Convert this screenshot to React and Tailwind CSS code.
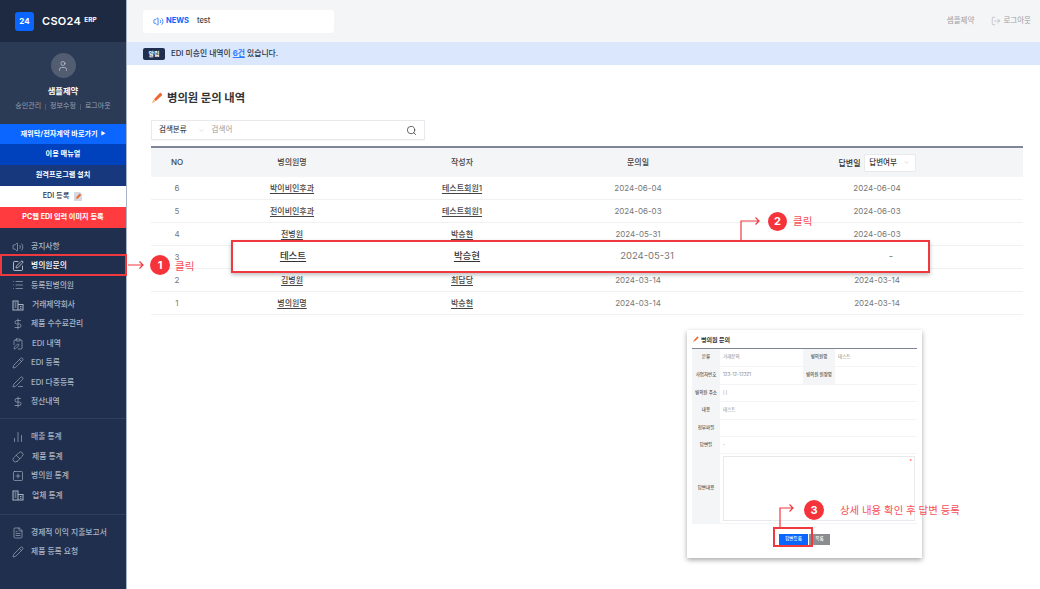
import React from "react";
import {
  Volume2, SquarePen, List, DollarSign, ClipboardPen, Pencil, PenLine,
  ChartNoAxesColumn, Pill, SquarePlus, FileText, User, LogOut, Search, ChevronDown,
} from "lucide-react";

const row = "grid grid-cols-[52px_178px_162px_190px_1fr] items-center text-center";

// 건물 아이콘은 패키지에 맞는 모양이 없어서 직접 그림
function Offices({ size = 12, strokeWidth = 1.3, className }) {
  return (
    <svg width={size} height={size} viewBox="0 0 12 12" fill="none" stroke="currentColor" strokeWidth={strokeWidth * 0.8} className={className}>
      <path d="M1 11V2h5v9M6 5.5h5V11M0.5 11h11" />
      <path d="M2.6 4h1.8M2.6 6h1.8M2.6 8h1.8M8 7.5h1.4M8 9.3h1.4" />
    </svg>
  );
}

const menuA = [
  { icon: Volume2, label: "공지사항" },
  { icon: SquarePen, label: "병의원문의", active: true },
  { icon: List, label: "등록된병의원" },
  { icon: Offices, label: "거래제약회사", indent: true },
  { icon: DollarSign, label: "제품 수수료관리" },
  { icon: ClipboardPen, label: "EDI 내역", indent: true },
  { icon: Pencil, label: "EDI 등록" },
  { icon: PenLine, label: "EDI 다중등록" },
  { icon: DollarSign, label: "정산내역" },
];
const menuB = [
  { icon: ChartNoAxesColumn, label: "매출 통계" },
  { icon: Pill, label: "제품 통계", indent: true },
  { icon: SquarePlus, label: "병의원 통계" },
  { icon: Offices, label: "업체 통계", indent: true },
];
const menuC = [
  { icon: FileText, label: "경제적 이익 지출보고서" },
  { icon: Pencil, label: "제품 등록 요청" },
];

const rows = [
  ["6", "박이비인후과", "테스트회원1", "2024-06-04", "2024-06-04"],
  ["5", "전이비인후과", "테스트회원1", "2024-06-03", "2024-06-03"],
  ["4", "전병원", "박승현", "2024-05-31", "2024-06-03"],
  ["3", "", "", "", ""],
  ["2", "김병원", "최담당", "2024-03-14", "2024-03-14"],
  ["1", "병의원명", "박승현", "2024-03-14", "2024-03-14"],
];

function PencilMark({ size = 12 }) {
  return (
    <svg width={size} height={size} viewBox="0 0 12 12" className="shrink-0">
      <path d="M3 7.2 8.6 1.2a1.1 1.1 0 0 1 1.5 0l.7.7a1.1 1.1 0 0 1 0 1.5L4.8 9Z" fill="#f0642e" />
      <path d="M2.6 7.6 4.4 9.4 0.8 11.2Z" fill="#f8b27a" />
    </svg>
  );
}

function DocPencil() {
  return (
    <svg width="10" height="11" viewBox="0 0 10 11" className="shrink-0">
      <path d="M1 1h6l2 2v7H1Z" fill="#d5d9e0" />
      <path d="M3 6.6 6.8 2.6l1.4 1.3L4.4 8Z" fill="#f0642e" />
      <path d="M3 6.6 4.4 8 2.2 8.8Z" fill="#f8b27a" />
    </svg>
  );
}

function MenuItem({ icon: Icon, label, active, indent }) {
  return (
    <div className={`flex h-[19.4px] items-center pl-[12px] text-[7.8px] font-medium ${active ? "text-white" : "text-[#aab4c4]"}`}>
      <Icon size={12} strokeWidth={1.3} className={`shrink-0 ${active ? "text-white" : "text-[#aab4c4]"}`} />
      <span className={indent ? "ml-[8px]" : "ml-[7px]"}>{label}</span>
    </div>
  );
}

function Sidebar() {
  return (
    <aside className="flex h-full w-[127px] shrink-0 flex-col border-r border-[#a9b4c6] bg-[#1f2f4d]">
      <div className="flex h-[42px] items-center bg-[#1d2a42] pl-[15px]">
        <div className="flex h-[19px] w-[19px] items-center justify-center rounded-[3px] bg-[#0a66ff] text-[8px] font-bold text-white">24</div>
        <span className="ml-[8px] text-[11px] font-semibold tracking-[0.3px] text-white">CSO24</span>
        <span className="ml-[3px] text-[6.5px] font-bold text-white">ERP</span>
      </div>
      <div className="flex h-[82px] flex-col items-center bg-[#2b3a55] pt-[11px]">
        <div className="flex h-[25px] w-[25px] items-center justify-center rounded-full bg-[#525d72]">
          <User size={12} strokeWidth={1.4} className="text-[#c6ccd6]" />
        </div>
        <div className="mt-[7px] text-[8.3px] font-bold text-white">샘플제약</div>
        <div className="mt-[4px] flex items-center gap-[4px] text-[7px] text-[#98a2b3]">
          <span>승인관리</span><span className="h-[6px] w-px bg-[#4d5a72]" />
          <span>정보수정</span><span className="h-[6px] w-px bg-[#4d5a72]" />
          <span>로그아웃</span>
        </div>
      </div>
      <div className="flex h-[20px] items-center justify-center gap-[3px] bg-[#0a66ff] text-[7.2px] font-bold text-white">
        재위탁/전자계약 바로가기
        <span className="text-[5px]">▶</span>
      </div>
      <div className="flex h-[21px] items-center justify-center bg-[#0041bd] text-[7.2px] font-bold text-white">이용 매뉴얼</div>
      <div className="flex h-[21px] items-center justify-center bg-[#17387c] text-[7.2px] font-bold text-white">원격프로그램 설치</div>
      <div className="flex h-[21px] items-center justify-center gap-[4px] bg-white text-[7.2px] font-medium text-[#1f2f4d]">
        EDI 등록
        <DocPencil />
      </div>
      <div className="flex h-[21px] items-center justify-center bg-[#ff3b3f] text-[7.2px] font-bold text-white">PC웹 EDI 입력 이미지 등록</div>
      <div className="mt-[9px]">
        {menuA.map((m) => <MenuItem key={m.label} {...m} />)}
      </div>
      <div className="mt-[6px] border-t border-[#2e3e5c] pt-[9px]">
        {menuB.map((m) => <MenuItem key={m.label} {...m} />)}
      </div>
      <div className="mt-[9px] border-t border-[#2e3e5c] pt-[8px]">
        {menuC.map((m) => <MenuItem key={m.label} {...m} />)}
      </div>
    </aside>
  );
}

function Main() {
  return (
    <main className="flex min-w-0 flex-1 flex-col bg-white">
      <header className="flex h-[42px] items-center justify-between bg-[#f4f5f7] pl-[16px] pr-[9px]">
        <div className="flex h-[23px] w-[191px] items-center rounded-[3px] bg-white pl-[10px]">
          <Volume2 size={11} strokeWidth={1.6} className="text-[#0a66ff]" />
          <span className="ml-[2px] text-[7.5px] font-bold text-[#0a66ff]">NEWS</span>
          <span className="ml-[8px] text-[7.5px] font-medium text-[#444]">test</span>
        </div>
        <div className="flex items-center text-[7.5px] text-[#9a9ea6]">
          <span>샘플제약</span>
          <LogOut size={10} strokeWidth={1.2} className="ml-[17px]" />
          <span className="ml-[2px]">로그아웃</span>
        </div>
      </header>
      <div className="flex h-[23px] items-center bg-[#dbe7fd] pl-[16px]">
        <span className="flex h-[12px] w-[22px] items-center justify-center rounded-[2px] bg-[#1f2f4d] text-[6px] font-bold text-white">알림</span>
        <span className="ml-[6px] text-[7.8px] font-medium text-[#2c3444]">
          EDI 미승인 내역이 <b className="font-bold text-[#2f7bff] underline">6건</b> 있습니다.
        </span>
      </div>
      <section className="pl-[24px] pr-[17px]">
        <h1 className="mt-[24px] flex h-[18px] items-center gap-[4px] text-[11.3px] font-bold text-[#333]">
          <PencilMark />
          병의원 문의 내역
        </h1>
        <div className="mt-[13px] flex h-[20px] w-[274px] items-center border border-[#e7e9ec] bg-white pl-[7px] pr-[7px] shadow-[0_1px_1px_rgba(0,0,0,0.03)]">
          <span className="text-[7.5px] font-medium text-[#444]">검색분류</span>
          <ChevronDown size={7} strokeWidth={1.2} className="ml-[11px] text-[#aaa]" />
          <span className="ml-[7px] flex-1 text-[7.5px] text-[#999]">검색어</span>
          <Search size={11} strokeWidth={1.6} className="text-[#333]" />
        </div>
        <div className="mt-[6px] border-t-2 border-[#7d8596]">
          <div className={`${row} h-[29px] bg-[#f4f5f7] text-[8px] font-medium text-[#444]`}>
            <span className="-mt-[2px]">NO</span>
            <span className="-mt-[2px]">병의원명</span>
            <span className="-mt-[2px]">작성자</span>
            <span className="-mt-[2px]">문의일</span>
            <span className="flex items-center justify-center gap-[3px] pr-[2px] text-[#333]">
              답변일
              <span className="flex h-[18px] w-[52px] items-center justify-center gap-[6px] rounded-[1px] border border-[#e7e9ec] bg-white text-[7.5px] text-[#333]">
                답변여부
                <ChevronDown size={7} strokeWidth={1.2} className="text-[#aaa]" />
              </span>
            </span>
          </div>
          {rows.map((r) => (
            <div key={r[0]} className={`${row} h-[23px] border-b border-[#f0f1f3] text-[8px] text-[#777]`}>
              <span>{r[0]}</span>
              <span className="font-medium text-[#444] underline underline-offset-2">{r[1]}</span>
              <span className="font-medium text-[#444] underline underline-offset-2">{r[2]}</span>
              <span>{r[3]}</span>
              <span className="pr-[2px]">{r[4]}</span>
            </div>
          ))}
        </div>
      </section>
    </main>
  );
}

function DetailRow({ h, label, children }) {
  return (
    <div className={`flex border-b border-[#f3f4f6] text-[4.5px] text-[#888] ${h}`}>
      <div className="flex w-[28px] shrink-0 items-center justify-center bg-[#f4f5f7] font-medium text-[#555]">{label}</div>
      {children}
    </div>
  );
}

// 안내용 미니 캡처 (상세 화면)
function DetailCard() {
  return (
    <div className="absolute left-[687px] top-[330px] h-[228px] w-[235px] bg-white px-[5px] shadow-[0_2px_5px_rgba(0,0,0,0.35)]">
      <div className="flex h-[18px] items-center gap-[2px] text-[6px] font-bold text-[#333]">
        <PencilMark size={7} />
        병의원 문의
      </div>
      <div className="border-t border-[#7d8596]">
        <DetailRow h="h-[18px]" label="분류">
          <div className="flex flex-1 items-center pl-[3px]">거래문의</div>
          <div className="flex w-[32px] items-center justify-center bg-[#f4f5f7] font-medium text-[#555]">병의원명</div>
          <div className="flex w-[82px] items-center pl-[3px]">테스트</div>
        </DetailRow>
        <DetailRow h="h-[18px]" label="사업자번호">
          <div className="flex flex-1 items-center pl-[3px]">123-12-12321</div>
          <div className="flex w-[32px] items-center justify-center bg-[#f4f5f7] font-medium text-[#555]">병의원 원장명</div>
          <div className="w-[82px]" />
        </DetailRow>
        <DetailRow h="h-[17px]" label="병의원 주소"><div className="flex items-center pl-[3px]">| |</div></DetailRow>
        <DetailRow h="h-[18px]" label="내용"><div className="flex items-center pl-[3px]">테스트</div></DetailRow>
        <DetailRow h="h-[17px]" label="첨부파일" />
        <DetailRow h="h-[17px]" label="답변일"><div className="flex items-center pl-[3px]">-</div></DetailRow>
        <DetailRow h="h-[70px]" label="답변내용">
          <div className="relative m-[2px] ml-[3px] flex-1 border border-[#e7e9ec]">
            <span className="absolute right-[2px] top-[1px] text-[5px] text-[#ff3b3f]">*</span>
          </div>
        </DetailRow>
      </div>
      <div className="mt-[10px] flex justify-center gap-[1px]">
        <span className="flex h-[11px] w-[29px] items-center justify-center bg-[#0a66ff] text-[4.5px] font-medium text-white">답변등록</span>
        <span className="flex h-[11px] w-[21px] items-center justify-center bg-[#8b8d91] text-[4.5px] font-medium text-white">목록</span>
      </div>
    </div>
  );
}

function Badge({ n, cls }) {
  return (
    <div className={`absolute flex items-center justify-center rounded-full bg-[#f5333b] font-bold text-white ${cls}`}>{n}</div>
  );
}

function Annotations() {
  return (
    <>
      <div className="absolute left-0 top-[254px] h-[22px] w-[127px] border-2 border-[#f0393f]" />
      <div className="absolute left-[231px] top-[240px] flex h-[33px] w-[699px] items-center border-2 border-[#f0393f] bg-white text-[9.5px] shadow-[0_2px_4px_rgba(0,0,0,0.25)]">
        <span className="absolute left-[28px] w-[64px] text-center font-medium text-[#333] underline underline-offset-2">테스트</span>
        <span className="absolute left-[202px] w-[64px] text-center font-medium text-[#333] underline underline-offset-2">박승현</span>
        <span className="absolute left-[374px] w-[80px] text-center text-[#777]">2024-05-31</span>
        <span className="absolute left-[650px] w-[16px] text-center text-[#777]">-</span>
      </div>
      <DetailCard />
      <div className="absolute left-[773px] top-[527px] h-[20px] w-[40px] border-2 border-[#f0393f]" />

      <svg className="absolute left-0 top-0" width="1040" height="589" fill="none" stroke="#f0393f" strokeWidth="1.2">
        <path d="M128 265H143M139.5 261.5 143 265 139.5 268.5" />
        <path d="M741 240V221H759M755.5 217.5 759 221 755.5 224.5" />
        <path d="M780 527V508H793M789.5 504.5 793 508 789.5 511.5" />
      </svg>

      <Badge n="1" cls="left-[150px] top-[255px] h-[20px] w-[20px] text-[11px]" />
      <span className="absolute left-[175px] top-[259px] text-[10.5px] text-[#f5505a]">클릭</span>
      <Badge n="2" cls="left-[768px] top-[212px] h-[19px] w-[19px] text-[11px]" />
      <span className="absolute left-[793px] top-[214px] text-[10.5px] text-[#f5505a]">클릭</span>
      <Badge n="3" cls="left-[804px] top-[500px] h-[20px] w-[20px] text-[11px]" />
      <span className="absolute left-[840px] top-[503px] text-[10.4px] text-[#f5505a]">상세 내용 확인 후 답변 등록</span>
    </>
  );
}

export default function App() {
  return (
    <div className="relative flex h-[589px] w-[1040px] overflow-hidden font-['Inter','Noto_Sans_CJK_KR',sans-serif]">
      <Sidebar />
      <Main />
      <Annotations />
    </div>
  );
}
